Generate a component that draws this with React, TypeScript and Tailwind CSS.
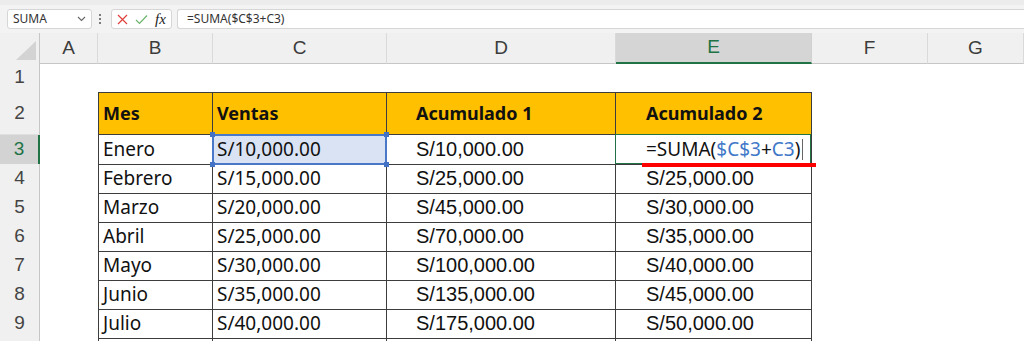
import React from 'react'

const GRID = 'grid grid-cols-[40px_58px_115px_174px_229px_196px_116px_1fr]'
const COLS = ['A', 'B', 'C', 'D', 'E', 'F', 'G']

type DataRow = { n: number; mes: string; ventas: string; acum1: string; acum2: string }

const rows: DataRow[] = [
  { n: 3, mes: 'Enero', ventas: 'S/10,000.00', acum1: 'S/10,000.00', acum2: '' },
  { n: 4, mes: 'Febrero', ventas: 'S/15,000.00', acum1: 'S/25,000.00', acum2: 'S/25,000.00' },
  { n: 5, mes: 'Marzo', ventas: 'S/20,000.00', acum1: 'S/45,000.00', acum2: 'S/30,000.00' },
  { n: 6, mes: 'Abril', ventas: 'S/25,000.00', acum1: 'S/70,000.00', acum2: 'S/35,000.00' },
  { n: 7, mes: 'Mayo', ventas: 'S/30,000.00', acum1: 'S/100,000.00', acum2: 'S/40,000.00' },
  { n: 8, mes: 'Junio', ventas: 'S/35,000.00', acum1: 'S/135,000.00', acum2: 'S/45,000.00' },
  { n: 9, mes: 'Julio', ventas: 'S/40,000.00', acum1: 'S/175,000.00', acum2: 'S/50,000.00' },
]

const cell = 'flex items-center border-r border-b border-[#3d3d3d] overflow-hidden whitespace-nowrap'
const aptos = 'font-["Noto_Sans",sans-serif] text-[19px] text-[#111]'
const aptosBold = 'font-["Noto_Sans",sans-serif] text-[18px] font-bold text-[#111]'
const arial = 'font-["Liberation_Sans",Arial,sans-serif] text-[20px] text-[#111]'

const RowNum = ({ n, active }: { n?: number; active?: boolean }) => (
  <div
    className={
      active
        ? 'flex items-center justify-center bg-[#d3d3d3] text-[#217346] border-r-2 border-r-[#217346] border-b border-b-[#d3d3d3]'
        : 'flex items-center justify-center bg-[#f0f0f0] text-[#444] border-r border-r-[#c6c6c6] border-b border-b-[#e0e0e0]'
    }
  >
    {n !== undefined && <span className='font-["Liberation_Sans",sans-serif] text-[19px]'>{n}</span>}
  </div>
)

const Toolbar = () => (
  <div className="h-[33px] bg-[#f3f3f3] border-t-[5px] border-t-[#ececec] flex items-center font-['Noto_Sans',sans-serif] text-[12px] text-[#333]">
    <div className="ml-[7px] w-[85px] h-[20px] bg-white border border-[#d6d6d6] rounded-[3px] flex items-center justify-between pl-[5px] pr-[5px]">
      <span>SUMA</span>
      <svg width="9" height="6" viewBox="0 0 9 6">
        <path d="M1 1 L4.5 4.5 L8 1" fill="none" stroke="#666" strokeWidth="1.1" />
      </svg>
    </div>
    <div className="ml-[6px] w-[4px] flex flex-col items-center gap-[2px]">
      <span className="w-[2px] h-[2px] bg-[#555] rounded-full" />
      <span className="w-[2px] h-[2px] bg-[#555] rounded-full" />
      <span className="w-[2px] h-[2px] bg-[#555] rounded-full" />
    </div>
    <div className="ml-[9px] w-[61px] h-[20px] bg-white border border-[#d6d6d6] rounded-[3px] flex items-center pl-[5px] gap-[7px]">
      <svg width="11" height="11" viewBox="0 0 11 11">
        <path d="M1 1 L10 10 M10 1 L1 10" stroke="#e0403c" strokeWidth="1.2" />
      </svg>
      <svg width="13" height="11" viewBox="0 0 13 11">
        <path d="M1 6 L4.5 9.5 L12 1.5" fill="none" stroke="#6bb56b" strokeWidth="1.2" />
      </svg>
      <span className="font-['Liberation_Serif',serif] italic text-[15px] text-[#222] leading-none">fx</span>
    </div>
    <div className="ml-[5px] flex-1 h-[20px] bg-white border border-r-0 border-[#d6d6d6] rounded-l-[3px] flex items-center pl-[9px]">
      =SUMA($C$3+C3)
    </div>
  </div>
)

const ColHeader = () => (
  <div className={`${GRID} h-[30px] bg-[#f0f0f0]`}>
    <div className="flex items-end justify-end pr-[3px] pb-[3px] border-r border-r-[#c6c6c6] border-b border-b-[#c6c6c6]">
      <svg width="20" height="19" viewBox="0 0 20 19">
        <polygon points="20,0 20,19 0,19" fill="#d3d3d3" />
      </svg>
    </div>
    {COLS.map((c) => (
      <div
        key={c}
        className={
          c === 'E'
            ? 'flex items-center justify-center bg-[#d5d5d5] text-[#217346] border-r border-r-[#d0d0d0] border-b-2 border-b-[#217346]'
            : 'flex items-center justify-center text-[#3c3c3c] border-r border-r-[#dadada] border-b border-b-[#c6c6c6]'
        }
      >
        <span className='font-["Liberation_Sans",sans-serif] text-[19px]'>{c}</span>
      </div>
    ))}
  </div>
)

const App = (): React.JSX.Element => {
  return (
    <div className="w-[1024px] h-[341px] overflow-hidden bg-white">
      <Toolbar />
      <ColHeader />

      {/* row 1 */}
      <div className={`${GRID} h-[29px]`}>
        <RowNum n={1} />
      </div>

      {/* row 2: headers */}
      <div className={`${GRID} h-[43px]`}>
        <RowNum n={2} />
        <div />
        <div className={`${cell} border-l border-t bg-[#ffc000] pl-[4px] ${aptosBold}`}>Mes</div>
        <div className={`${cell} border-t bg-[#ffc000] pl-[4px] ${aptosBold}`}>Ventas</div>
        <div className={`${cell} border-t bg-[#ffc000] pl-[29px] ${aptosBold}`}>Acumulado 1</div>
        <div className={`${cell} border-t bg-[#ffc000] pl-[30px] ${aptosBold}`}>Acumulado 2</div>
      </div>

      {rows.map((r) => (
        <div key={r.n} className={`${GRID} h-[29px]`}>
          <RowNum n={r.n} active={r.n === 3} />
          <div />
          <div className={`${cell} border-l pl-[4px] ${aptos}`}>{r.mes}</div>
          {r.n === 3 ? (
            <div className={`${cell} relative overflow-visible pl-[4px] bg-[#dae3f3] ${aptos}`}>
              <div className="absolute -left-px -top-px -right-px -bottom-px border-2 border-[#4a78c8]" />
              <span className="absolute -left-[3px] -top-[3px] w-[5px] h-[5px] bg-[#4472c4]" />
              <span className="absolute -right-[3px] -top-[3px] w-[5px] h-[5px] bg-[#4472c4]" />
              <span className="absolute -left-[3px] -bottom-[3px] w-[5px] h-[5px] bg-[#4472c4]" />
              <span className="absolute -right-[3px] -bottom-[3px] w-[5px] h-[5px] bg-[#4472c4]" />
              <span className="relative">{r.ventas}</span>
            </div>
          ) : (
            <div className={`${cell} pl-[4px] ${aptos}`}>{r.ventas}</div>
          )}
          <div className={`${cell} pl-[29px] ${arial}`}>{r.acum1}</div>
          {r.n === 3 ? (
            <div className={`${cell} relative overflow-visible pl-[30px] ${aptos}`}>
              <div className="absolute -left-px -top-px right-0 bottom-0 border border-[#217346]" />
              <span className="relative flex items-center">
                =SUMA(<span className="text-[#3f78c8]">$C$3</span>+<span className="text-[#3f78c8]">C3</span>)
                <span className="inline-block w-px h-[21px] bg-[#666] ml-[2px]" />
              </span>
              <div className="absolute left-[26px] top-[28px] w-[174px] h-[4px] bg-[#ff0000] z-10" />
            </div>
          ) : (
            <div className={`${cell} pl-[30px] ${arial}`}>{r.acum2}</div>
          )}
        </div>
      ))}

      {/* row 10, cut off by the window */}
      <div className={`${GRID} h-[29px]`}>
        <RowNum />
        <div />
        <div className={`${cell} border-l`} />
        <div className={cell} />
        <div className={cell} />
        <div className={cell} />
      </div>
    </div>
  )
}

export default App
